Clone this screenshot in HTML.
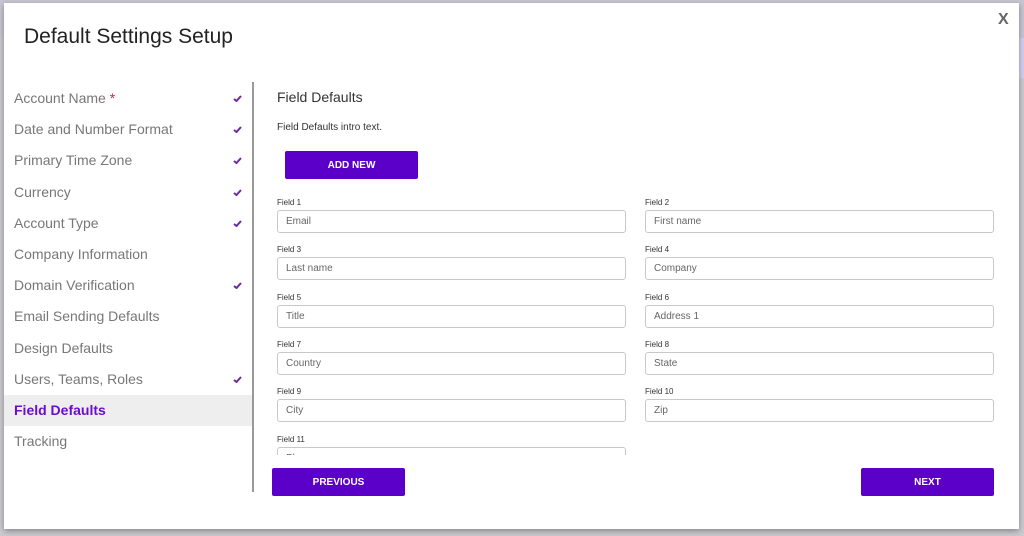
<!DOCTYPE html>
<html><head><style>
*{margin:0;padding:0;box-sizing:border-box}
body{width:1024px;height:536px;background:#cbcbd0;position:relative;overflow:hidden;font-family:"Liberation Sans",sans-serif}
.bgtop{position:absolute;left:0;top:0;width:1024px;height:38px;background:#c9c6d3}
.bgright{position:absolute;right:0;top:38px;width:6px;height:40px;background:#d6cff0}
.modal{position:absolute;left:4px;top:3px;width:1015px;height:526px;background:#fff;box-shadow:0 2px 6px rgba(0,0,0,.35)}
.title{position:absolute;left:20px;top:22px;font-size:21px;color:#222;}
.close{position:absolute;left:994px;top:8px;font-size:16px;font-weight:bold;color:#666}
.nav{position:absolute;left:0;top:80px;width:248px}
.nav div{height:31.2px;line-height:31.2px;padding-left:10px;font-size:14px;color:#777;position:relative}
.nav div.on{background:#eeeeee;color:#6a0dcc;font-weight:bold}
.nav svg{position:absolute;left:229px;top:12px}
.star{color:#e0203a}
.div{position:absolute;left:248px;top:79px;width:2px;height:410px;background:#999}
.h{position:absolute;left:273px;top:86px;font-size:14px;color:#333}
.intro{position:absolute;left:273px;top:119px;font-size:10px;color:#333}
.btn{position:absolute;background:#5a00c8;color:#fff;font-size:10px;font-weight:bold;border-radius:2px;height:28px;width:133px;display:flex;align-items:center;justify-content:center}
.scroll{position:absolute;left:273px;top:190px;width:720px;height:262px;overflow:hidden}
.f{position:absolute;width:349px}
.f label{display:block;font-size:8px;color:#333;height:14px;padding-top:2px}
.f .in{height:23px;border:1px solid #c8c8c8;border-radius:3px;font-size:10px;color:#666;padding-left:8px;display:flex;align-items:center}
</style></head><body>
<div class="bgtop"></div><div class="bgright"></div>
<div class="modal">
<div class="title">Default Settings Setup</div>
<div class="close">X</div>
<div class="nav">
<div>Account Name <span class="star">*</span><svg width="9" height="7" viewBox="0 0 9 7"><path d="M1 4L3.5 6L8 1" stroke="#6a2aa0" stroke-width="2" fill="none"/></svg></div>
<div>Date and Number Format<svg width="9" height="7" viewBox="0 0 9 7"><path d="M1 4L3.5 6L8 1" stroke="#6a2aa0" stroke-width="2" fill="none"/></svg></div>
<div>Primary Time Zone<svg width="9" height="7" viewBox="0 0 9 7"><path d="M1 4L3.5 6L8 1" stroke="#6a2aa0" stroke-width="2" fill="none"/></svg></div>
<div>Currency<svg width="9" height="7" viewBox="0 0 9 7"><path d="M1 4L3.5 6L8 1" stroke="#6a2aa0" stroke-width="2" fill="none"/></svg></div>
<div>Account Type<svg width="9" height="7" viewBox="0 0 9 7"><path d="M1 4L3.5 6L8 1" stroke="#6a2aa0" stroke-width="2" fill="none"/></svg></div>
<div>Company Information</div>
<div>Domain Verification<svg width="9" height="7" viewBox="0 0 9 7"><path d="M1 4L3.5 6L8 1" stroke="#6a2aa0" stroke-width="2" fill="none"/></svg></div>
<div>Email Sending Defaults</div>
<div>Design Defaults</div>
<div>Users, Teams, Roles<svg width="9" height="7" viewBox="0 0 9 7"><path d="M1 4L3.5 6L8 1" stroke="#6a2aa0" stroke-width="2" fill="none"/></svg></div>
<div class="on">Field Defaults</div>
<div>Tracking</div>
</div>
<div class="div"></div>
<div class="h">Field Defaults</div>
<div class="intro">Field Defaults intro text.</div>
<div class="btn" style="left:281px;top:148px">ADD NEW</div>
<div class="scroll">
<div class="f" style="left:0;top:3px"><label>Field 1</label><div class="in">Email</div></div>
<div class="f" style="left:368px;top:3px"><label>Field 2</label><div class="in">First name</div></div>
<div class="f" style="left:0;top:50px"><label>Field 3</label><div class="in">Last name</div></div>
<div class="f" style="left:368px;top:50px"><label>Field 4</label><div class="in">Company</div></div>
<div class="f" style="left:0;top:98px"><label>Field 5</label><div class="in">Title</div></div>
<div class="f" style="left:368px;top:98px"><label>Field 6</label><div class="in">Address 1</div></div>
<div class="f" style="left:0;top:145px"><label>Field 7</label><div class="in">Country</div></div>
<div class="f" style="left:368px;top:145px"><label>Field 8</label><div class="in">State</div></div>
<div class="f" style="left:0;top:192px"><label>Field 9</label><div class="in">City</div></div>
<div class="f" style="left:368px;top:192px"><label>Field 10</label><div class="in">Zip</div></div>
<div class="f" style="left:0;top:240px"><label>Field 11</label><div class="in">Phone</div></div>
</div>
<div class="btn" style="left:268px;top:465px">PREVIOUS</div>
<div class="btn" style="left:857px;top:465px">NEXT</div>
</div>
</body></html>
